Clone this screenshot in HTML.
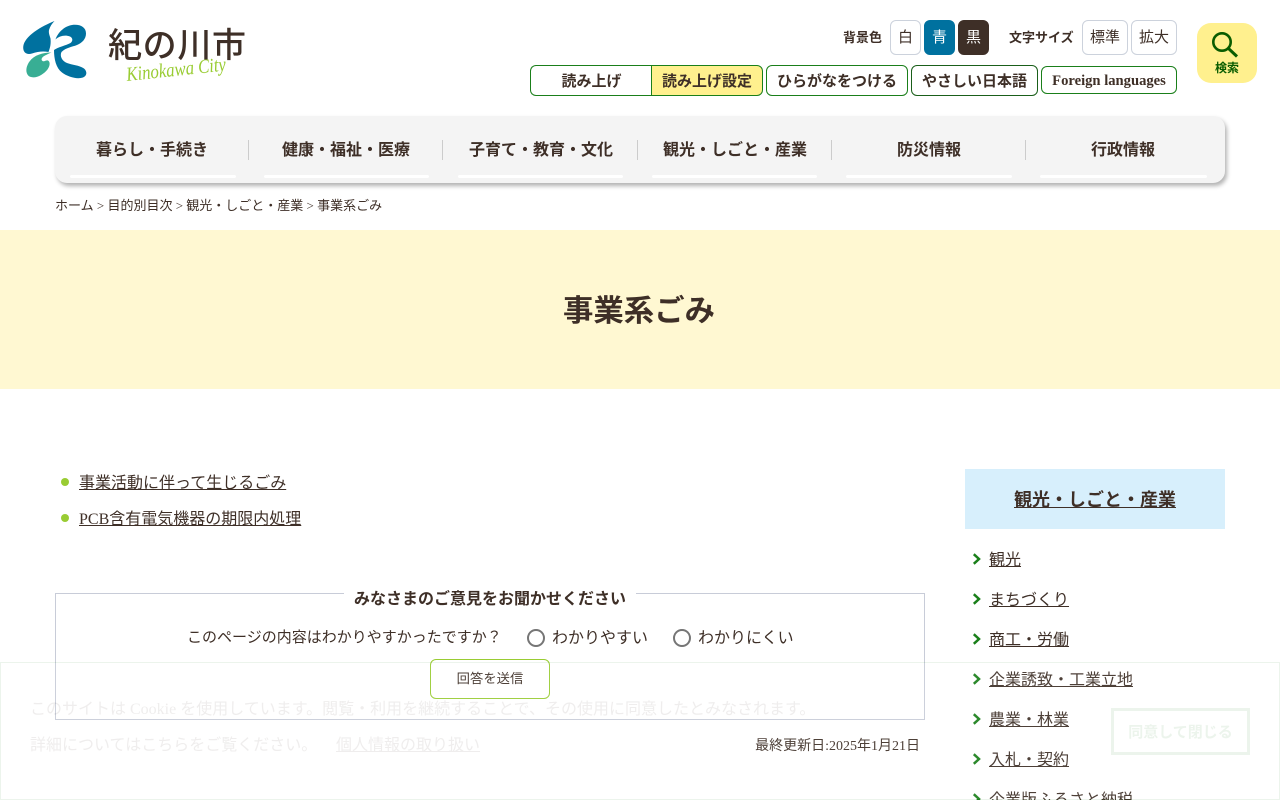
<!DOCTYPE html>
<html lang="ja"><head><meta charset="utf-8"><title>事業系ごみ</title>
<style>
html,body{margin:0;padding:0;width:1280px;height:800px;overflow:hidden;background:#fff}
body{font-family:"Liberation Serif","Noto Sans CJK JP",serif;color:#3e2f27;position:relative}
.a{position:absolute;white-space:nowrap;box-sizing:border-box}
.c{display:flex;align-items:center;justify-content:center}
.btn{background:#fff;border:1px solid #ccd2dc;border-radius:6px;font-size:15px;padding-bottom:2px}
.g{background:#fff;border:1px solid #1a7f1a;border-radius:6px;font-size:15px;font-weight:bold}
.sep{position:absolute;top:140px;width:1px;height:20px;background:#ccc}
.ul{position:absolute;top:175px;height:3px;background:#fff;border-radius:2px}
.nav{position:absolute;top:128px;height:40px;font-size:16px;font-weight:bold;display:flex;align-items:center;justify-content:center;white-space:nowrap}
a{color:#3e2f27;text-decoration:underline}
.dot{position:absolute;left:61px;width:8px;height:8px;border-radius:50%;background:#9c3}
.side{position:absolute;left:989px;font-size:16px;line-height:20px;white-space:nowrap}
.chev{position:absolute;left:972px;width:9px;height:12px}
.radio{position:absolute;top:629px;width:18px;height:18px;border:2px solid #767676;border-radius:50%;box-sizing:border-box;background:#fff}
</style></head><body>

<svg class="a" style="left:0;top:0" width="260" height="100" viewBox="0 0 260 100">
<path fill="#00719f" d="M54.5 21C42 26 24 36 23.2 47C23 53 27 55 32 53.5C38 51.5 43 51 48.5 52C50.5 47 51 43 50.5 38.5C49.5 35 48.5 33 49 30C50 26.5 52 23.5 54.5 21Z"/>
<path fill="#00719f" d="M55.5 39.5C58 32 65 26 72 25C80 24 86 27 86 33.5C86 39 82 43 77 45C72 47 66 47.5 61.5 52C59.5 56 62 61 67 63C72 65 79 65 84 68.5C87.5 71.5 87 76 83 77.5C77 79.5 68 77 62 72.5C56 68 54 59 54 50C58 47 66 45.5 70.5 43C73 41 73 38 70 36.5C65 34.5 59 36 55.5 39.5Z"/>
<path fill="#38ae94" d="M51.5 52.5C43 52.5 34 55 29.5 61.5C25.5 67 25 74 30 76.8C36 79 43.5 74.5 47.5 69.5C50 66 50.5 62 48 60.5C46 60 44.5 62 42.5 61C40.5 59.5 42 57 45 55.5C47 54.5 49.5 53.2 51.5 52.5Z"/>
<text x="108" y="57" font-family="'Noto Sans CJK JP',sans-serif" font-weight="500" font-size="34" fill="#3e2f27" textLength="138" lengthAdjust="spacing">紀の川市</text>
<text x="127" y="81" font-family="'Liberation Serif',serif" font-style="italic" font-size="20" fill="#9c3" textLength="100" lengthAdjust="spacingAndGlyphs" transform="rotate(-6 127 81)">Kinokawa City</text>
</svg>

<div class="a" style="left:843px;top:29px;font-size:13px;font-weight:bold;line-height:18px">背景色</div>
<div class="a c btn" style="left:890px;top:20px;width:31px;height:35px">白</div>
<div class="a c btn" style="left:924px;top:20px;width:31px;height:35px;background:#00719f;border-color:#00719f;color:#fff">青</div>
<div class="a c btn" style="left:958px;top:20px;width:31px;height:35px;background:#3e2f27;border-color:#3e2f27;color:#fff">黒</div>
<div class="a" style="left:1009px;top:29px;font-size:13px;font-weight:bold;line-height:18px">文字サイズ</div>
<div class="a c btn" style="left:1082px;top:20px;width:46px;height:35px">標準</div>
<div class="a c btn" style="left:1131px;top:20px;width:46px;height:35px">拡大</div>

<div class="a c g" style="left:530px;top:65px;width:122px;height:31px;border-radius:6px 0 0 6px;border-right:0">読み上げ</div>
<div class="a c g" style="left:651px;top:65px;width:112px;height:31px;border-radius:0 6px 6px 0;background:#fff08e">読み上げ設定</div>
<div class="a c g" style="left:766px;top:65px;width:142px;height:31px">ひらがなをつける</div>
<div class="a c g" style="left:911px;top:65px;width:127px;height:31px;border-color:#1a5f1a">やさしい日本語</div>
<div class="a c g" style="left:1041px;top:66px;width:136px;height:28px;padding-top:2px;font-size:14.6px">Foreign languages</div>

<div class="a" style="left:1197px;top:23px;width:60px;height:60px;background:#fff08e;border-radius:14px"></div>
<svg class="a" style="left:1210px;top:30px" width="30" height="30" viewBox="0 0 30 30"><circle cx="12" cy="12" r="8.7" fill="none" stroke="#0a5c00" stroke-width="2.6"/><path d="M18.5 18.5L27 26.5" stroke="#0a5c00" stroke-width="3" fill="none"/></svg>
<div class="a" style="left:1197px;top:60px;width:60px;text-align:center;font-size:12px;font-weight:bold;color:#0a5c00;line-height:16px">検索</div>

<div class="a" style="left:55px;top:116px;width:1170px;height:67px;background:#f4f4f4;border-radius:12px;box-shadow:2px 3px 4px rgba(0,0,0,.3)"></div>
<div class="nav" style="left:55px;width:194px">暮らし・手続き</div>
<div class="nav" style="left:249px;width:194px">健康・福祉・医療</div>
<div class="nav" style="left:444px;width:194px">子育て・教育・文化</div>
<div class="nav" style="left:638px;width:194px">観光・しごと・産業</div>
<div class="nav" style="left:832px;width:194px">防災情報</div>
<div class="nav" style="left:1026px;width:194px">行政情報</div>
<div class="sep" style="left:248px"></div><div class="sep" style="left:442px"></div><div class="sep" style="left:637px"></div><div class="sep" style="left:831px"></div><div class="sep" style="left:1025px"></div>
<div class="ul" style="left:70px;width:166px"></div><div class="ul" style="left:264px;width:165px"></div><div class="ul" style="left:458px;width:165px"></div><div class="ul" style="left:652px;width:165px"></div><div class="ul" style="left:846px;width:166px"></div><div class="ul" style="left:1040px;width:167px"></div>

<div class="a" style="left:55px;top:196px;font-size:13px;line-height:20px">ホーム &gt; 目的別目次 &gt; 観光・しごと・産業 &gt; 事業系ごみ</div>

<div class="a c" style="left:0;top:230px;width:1280px;height:159px;background:#fff8d2;font-size:30.4px;font-weight:bold;padding-bottom:4px;padding-right:2px">事業系ごみ</div>

<div class="dot" style="top:478px"></div>
<div class="a" style="left:79px;top:473px;font-size:16px;line-height:22px"><a href="#">事業活動に伴って生じるごみ</a></div>
<div class="dot" style="top:514px"></div>
<div class="a" style="left:79px;top:509px;font-size:16px;line-height:22px"><a href="#">PCB含有電気機器の期限内処理</a></div>

<div class="a" style="left:55px;top:593px;width:870px;height:127px;border:1px solid #c8ccd8"></div>
<div class="a c" style="left:344px;top:585px;width:292px;height:24px;background:#fff;font-size:16px;font-weight:bold">みなさまのご意見をお聞かせください</div>
<div class="a" style="left:187px;top:627px;font-size:15px;line-height:22px">このページの内容はわかりやすかったですか？</div>
<div class="radio" style="left:527px"></div>
<div class="a" style="left:552px;top:628px;font-size:16px;line-height:22px">わかりやすい</div>
<div class="radio" style="left:673px"></div>
<div class="a" style="left:698px;top:628px;font-size:16px;line-height:22px">わかりにくい</div>
<div class="a c" style="left:430px;top:659px;width:120px;height:40px;border:1px solid #9c3;border-radius:6px;background:#fff;font-size:13.33px;padding-bottom:3px">回答を送信</div>
<div class="a" style="right:360px;top:737px;font-size:14px;line-height:20px">最終更新日:2025年1月21日</div>

<div class="a c" style="left:965px;top:469px;width:260px;height:60px;background:#d7effc;font-size:18px;font-weight:bold"><a href="#">観光・しごと・産業</a></div>
<svg class="chev" style="top:553px" viewBox="0 0 9 12"><path d="M1.8 1.2L7 6L1.8 10.8" fill="none" stroke="#1a7f1a" stroke-width="2.5"/></svg>
<div class="side" style="top:551px"><a href="#">観光</a></div>
<svg class="chev" style="top:593px" viewBox="0 0 9 12"><path d="M1.8 1.2L7 6L1.8 10.8" fill="none" stroke="#1a7f1a" stroke-width="2.5"/></svg>
<div class="side" style="top:591px"><a href="#">まちづくり</a></div>
<svg class="chev" style="top:633px" viewBox="0 0 9 12"><path d="M1.8 1.2L7 6L1.8 10.8" fill="none" stroke="#1a7f1a" stroke-width="2.5"/></svg>
<div class="side" style="top:631px"><a href="#">商工・労働</a></div>
<svg class="chev" style="top:673px" viewBox="0 0 9 12"><path d="M1.8 1.2L7 6L1.8 10.8" fill="none" stroke="#1a7f1a" stroke-width="2.5"/></svg>
<div class="side" style="top:671px"><a href="#">企業誘致・工業立地</a></div>
<svg class="chev" style="top:713px" viewBox="0 0 9 12"><path d="M1.8 1.2L7 6L1.8 10.8" fill="none" stroke="#1a7f1a" stroke-width="2.5"/></svg>
<div class="side" style="top:711px"><a href="#">農業・林業</a></div>
<svg class="chev" style="top:753px" viewBox="0 0 9 12"><path d="M1.8 1.2L7 6L1.8 10.8" fill="none" stroke="#1a7f1a" stroke-width="2.5"/></svg>
<div class="side" style="top:751px"><a href="#">入札・契約</a></div>
<svg class="chev" style="top:793px" viewBox="0 0 9 12"><path d="M1.8 1.2L7 6L1.8 10.8" fill="none" stroke="#1a7f1a" stroke-width="2.5"/></svg>
<div class="side" style="top:791px"><a href="#">企業版ふるさと納税</a></div>

<div class="a" style="left:0;top:662px;width:1280px;height:138px;border:1px solid #1a7f1a;background:#fff;opacity:.08">
  <div class="a" style="left:29px;top:36px;font-size:16px;line-height:22px">このサイトは Cookie を使用しています。閲覧・利用を継続することで、その使用に同意したとみなされます。</div>
  <div class="a" style="left:29px;top:72px;font-size:16px;line-height:22px">詳細についてはこちらをご覧ください。</div>
  <div class="a" style="left:335px;top:72px;font-size:16px;line-height:22px"><a href="#">個人情報の取り扱い</a></div>
  <div class="a c" style="left:1110px;top:45px;width:139px;height:47px;border:3px solid #1a7f1a;background:#fff;color:#1a7f1a;font-size:15px;font-weight:bold">同意して閉じる</div>
</div>
</body></html>
